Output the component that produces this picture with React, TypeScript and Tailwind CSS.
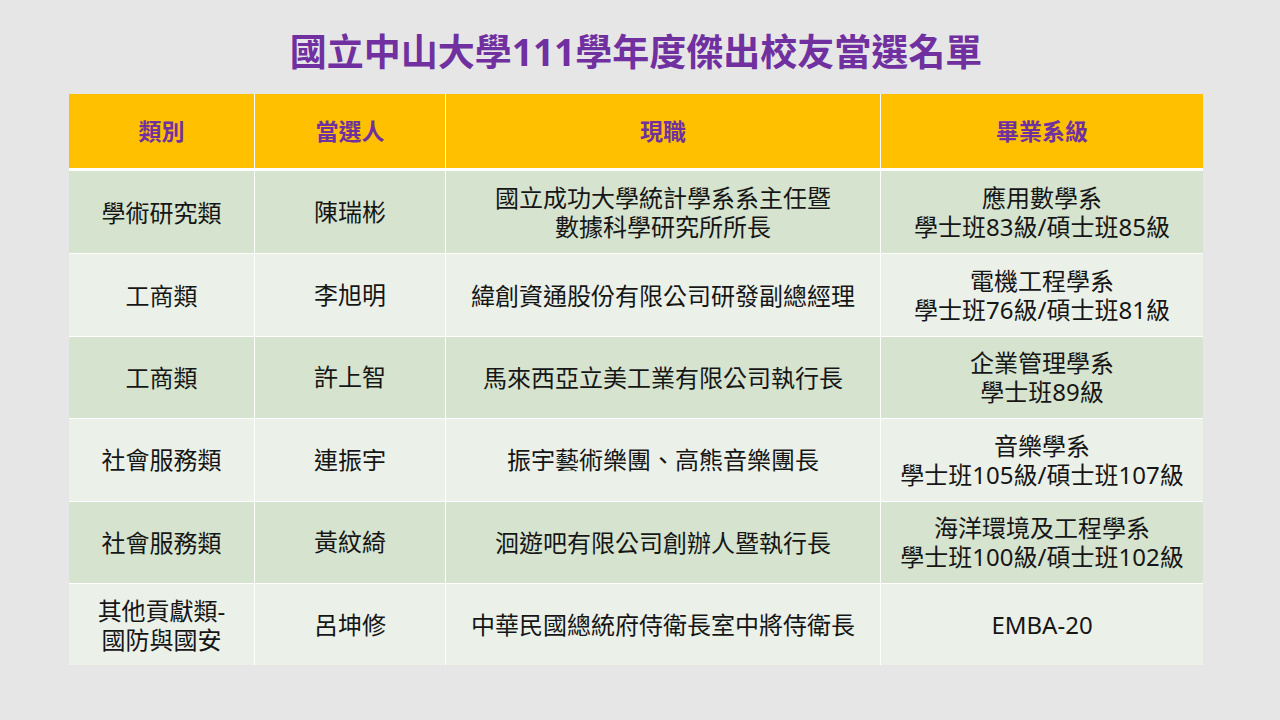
const rows = [
  { cat: ['學術研究類'], name: '陳瑞彬', job: ['國立成功大學統計學系系主任暨', '數據科學研究所所長'], dept: ['應用數學系', '學士班83級/碩士班85級'] },
  { cat: ['工商類'], name: '李旭明', job: ['緯創資通股份有限公司研發副總經理'], dept: ['電機工程學系', '學士班76級/碩士班81級'] },
  { cat: ['工商類'], name: '許上智', job: ['馬來西亞立美工業有限公司執行長'], dept: ['企業管理學系', '學士班89級'] },
  { cat: ['社會服務類'], name: '連振宇', job: ['振宇藝術樂團、高熊音樂團長'], dept: ['音樂學系', '學士班105級/碩士班107級'] },
  { cat: ['社會服務類'], name: '黃紋綺', job: ['洄遊吧有限公司創辦人暨執行長'], dept: ['海洋環境及工程學系', '學士班100級/碩士班102級'] },
  { cat: ['其他貢獻類-', '國防與國安'], name: '呂坤修', job: ['中華民國總統府侍衛長室中將侍衛長'], dept: ['EMBA-20'] },
]

function Lines({ lines }: { lines: string[] }) {
  return (
    <div className="flex flex-col items-center leading-[29px]">
      {lines.map((l) => (
        <div key={l} className="h-[29px] whitespace-nowrap">{l}</div>
      ))}
    </div>
  )
}

export default function App() {
  return (
    <div
      className="w-[1280px] h-[720px] bg-[#e7e6e6] pl-[69px]"
      style={{ fontFamily: '"Noto Sans", "Noto Sans CJK TC", sans-serif' }}
    >
      <div className="w-[1134px] flex flex-col items-center">
        <h1 className="mt-[29px] h-[46px] text-[37px] leading-[46px] font-bold text-[#7030a0]">
          國立中山大學111學年度傑出校友當選名單
        </h1>
        <div className="mt-[19px] w-[1134px] flex flex-col text-[24px] font-normal text-[#161616]">
          <div className="grid grid-cols-[185px_191px_435px_323px] h-[74px] bg-[#ffc000] text-[#7030a0] text-[23px] font-bold border-b-[3px] border-white box-content">
            {['類別', '當選人', '現職', '畢業系級'].map((h, i) => (
              <div key={h} className={`flex items-center justify-center ${i > 0 ? 'border-l border-white' : ''}`}>
                {h}
              </div>
            ))}
          </div>
          {rows.map((r, idx) => (
            <div
              key={idx}
              className={`grid grid-cols-[185px_191px_435px_323px] h-[82.4px] ${idx % 2 === 0 ? 'bg-[#d5e3cf]' : 'bg-[#ebf1e9]'} ${idx > 0 ? 'border-t border-white' : ''}`}
            >
              <div className="flex items-center justify-center">
                <Lines lines={r.cat} />
              </div>
              <div className="flex items-center justify-center border-l border-white">{r.name}</div>
              <div className="flex items-center justify-center border-l border-white">
                <Lines lines={r.job} />
              </div>
              <div className="flex items-center justify-center border-l border-white">
                <Lines lines={r.dept} />
              </div>
            </div>
          ))}
        </div>
      </div>
    </div>
  )
}
